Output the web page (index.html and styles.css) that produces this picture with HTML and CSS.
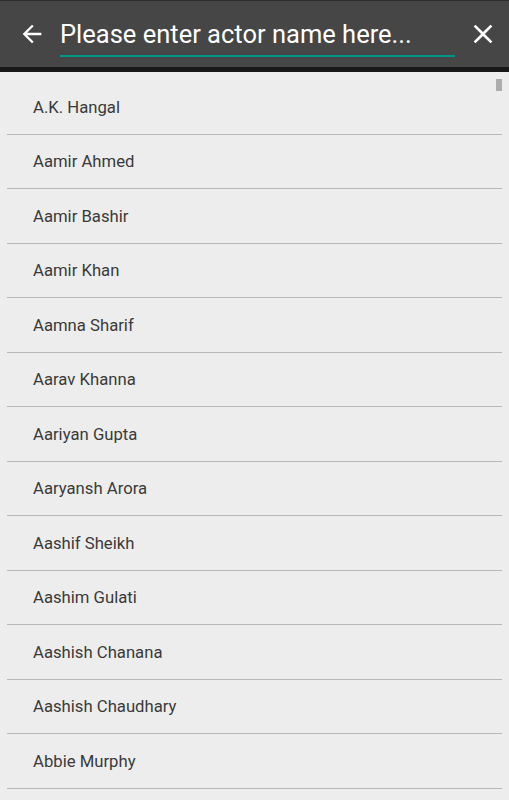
FILE: index.html
```html
<!DOCTYPE html>
<html lang="en">

<head>
    <meta charset="UTF-8">
    <meta name="viewport" content="width=device-width,initial-scale=1">
    <title>Actors</title>
    <link rel="stylesheet" href="styles.css">
</head>

<body>
    <header class="toolbar">
        <button class="icon-btn back" aria-label="Back">
            <svg width="24" height="24" viewBox="0 0 24 24"><path d="M20 11H7.83l5.59-5.59L12 4l-8 8 8 8 1.41-1.41L7.83 13H20v-2z" fill="#fff"/></svg>
        </button>
        <div class="search">
            <input type="text" placeholder="Please enter actor name here...">
        </div>
        <button class="icon-btn close" aria-label="Clear">
            <svg width="24" height="24" viewBox="0 0 24 24"><path d="M19 6.41L17.59 5 12 10.59 6.41 5 5 6.41 10.59 12 5 17.59 6.41 19 12 13.41 17.59 19 19 17.59 13.41 12z" fill="#fff"/></svg>
        </button>
    </header>

    <main class="list">
        <span class="scrollbar"></span>
        <div class="row">A.K. Hangal</div>
        <div class="row">Aamir Ahmed</div>
        <div class="row">Aamir Bashir</div>
        <div class="row">Aamir Khan</div>
        <div class="row">Aamna Sharif</div>
        <div class="row">Aarav Khanna</div>
        <div class="row">Aariyan Gupta</div>
        <div class="row">Aaryansh Arora</div>
        <div class="row">Aashif Sheikh</div>
        <div class="row">Aashim Gulati</div>
        <div class="row">Aashish Chanana</div>
        <div class="row">Aashish Chaudhary</div>
        <div class="row">Abbie Murphy</div>
    </main>
</body>

</html>
```

FILE: styles.css
```css
html {
    height: 100%;
}

body {
    height: 100%;
    margin: 0;
    padding: 0;
    overflow: hidden;
    font-family: Roboto, "Liberation Sans", sans-serif;
    background: #ededed;
}

.toolbar {
    display: flex;
    align-items: center;
    height: 66px;
    border-top: 1px solid #2e2e2e;
    border-bottom: 5px solid #181818;
    background: #464646;
}

.icon-btn {
    display: flex;
    align-items: center;
    justify-content: center;
    padding: 0;
    border: 0;
    background: none;
}

.back {
    margin-left: 18px;
    width: 28px;
    height: 28px;
}

.back svg {
    width: 30px;
    height: 30px;
}

.search {
    flex: 1;
    margin-left: 14px;
    margin-top: 6px;
}

.search input {
    display: block;
    box-sizing: border-box;
    width: 395px;
    height: 39px;
    padding: 0 0 4px 0;
    border: 0;
    border-bottom: 2px solid #009688;
    outline: none;
    background: none;
    font-family: Roboto, "Liberation Sans", sans-serif;
    font-size: 25.5px;
    color: #fff;
}

.search input::placeholder {
    color: #fff;
    opacity: 1;
}

.close {
    margin-right: 10px;
    width: 32px;
    height: 32px;
}

.close svg {
    width: 34px;
    height: 34px;
}

.list {
    position: relative;
    padding: 8px 7px 0 7px;
}

.scrollbar {
    position: absolute;
    top: 7px;
    right: 7px;
    width: 6px;
    height: 12px;
    background: #acacac;
}

.row {
    display: flex;
    align-items: center;
    box-sizing: border-box;
    height: 54.5px;
    padding: 1px 0 0 26px;
    border-bottom: 1.5px solid #b8b8b8;
    font-size: 16.7px;
    color: #3a3a3a;
}
```
